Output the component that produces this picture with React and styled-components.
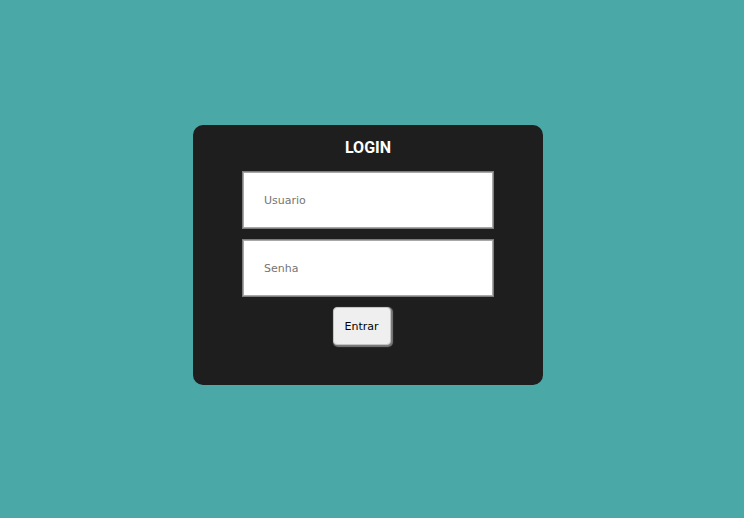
import styled, { createGlobalStyle } from "styled-components";

const GlobalStyle = createGlobalStyle`
    body{
        margin: 0;
        background: #4aa8a6;
        font-family: "DejaVu Sans", Verdana, sans-serif;
    }
`

export default function App(){
    return(
        <Page>
            <GlobalStyle/>
            <Card>
                <Title>LOGIN</Title>
                <Field type="text" placeholder="Usuario"/>
                <Field type="password" placeholder="Senha"/>
                <Button>Entrar</Button>
            </Card>
        </Page>
    )
}

const Page = styled.div`
    min-height: 100vh;
    box-sizing: border-box;
    padding: 0 8px 8px 0;
    display: flex;
    justify-content: center;
    align-items: center;
`

const Card = styled.div`
    width: 350px;
    height: 260px;
    box-sizing: border-box;
    background: #1e1e1e;
    border-radius: 10px;
    padding-top: 13px;
    display: flex;
    flex-direction: column;
    align-items: center;
    gap: 10px;
`

const Title = styled.h1`
    margin: 0 0 3px 0;
    color: #ffffff;
    font-family: Roboto, "Liberation Sans", Arial, sans-serif;
    font-size: 16px;
    line-height: 20px;
    font-weight: 700;
`

const Field = styled.input`
    width: 252px;
    height: 58px;
    box-sizing: border-box;
    border: 1px solid #7d7d7d;
    box-shadow: inset 0 0 0 1px #a8a8a8;
    padding: 0 21px;
    font-family: "DejaVu Sans", Verdana, sans-serif;
    font-size: 11px;
    color: #333;
    background: #ffffff;
    outline: none;
    &::placeholder{
        color: #757575;
    }
`

const Button = styled.button`
    width: 58px;
    height: 38px;
    margin-right: 13px;
    box-sizing: border-box;
    background: #efefef;
    border: 1px solid #c4c4c4;
    border-radius: 4px;
    box-shadow: 1px 1px 1px 1px #7a7a7a;
    font-family: "DejaVu Sans", Verdana, sans-serif;
    font-size: 11px;
    color: #000;
    padding: 0;
`
